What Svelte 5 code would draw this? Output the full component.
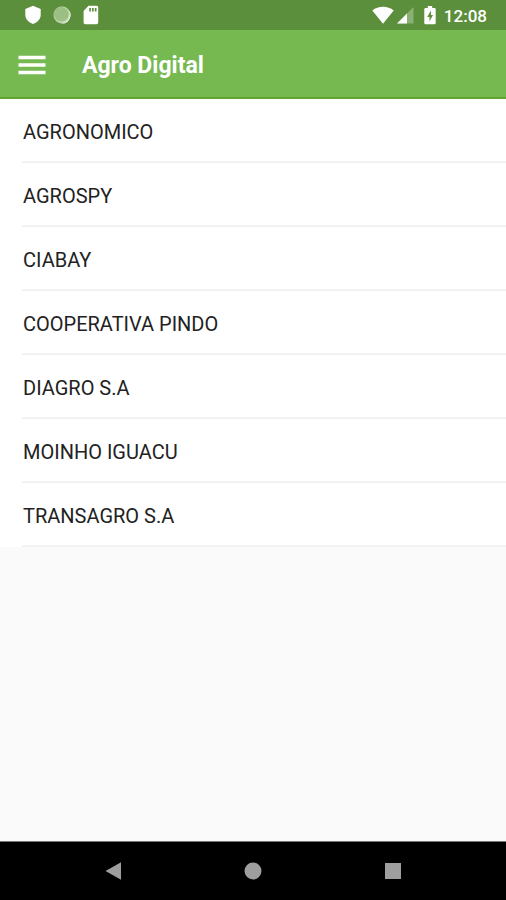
<script>
  const companies = [
    'AGRONOMICO',
    'AGROSPY',
    'CIABAY',
    'COOPERATIVA PINDO',
    'DIAGRO S.A',
    'MOINHO IGUACU',
    'TRANSAGRO S.A',
  ];
</script>

<div class="screen">
  <div class="status">
    <div class="group notices">
      <svg width="16" height="20" viewBox="0 0 16 20" aria-hidden="true">
        <path d="M8 .8 15.700 4v6c0 4-3.200 7.200-7.700 9C3.500 17.200.3 14 .3 10V4Z" fill="#fff" />
      </svg>
      <svg width="18" height="20" viewBox="0 0 18 20" aria-hidden="true">
        <circle cx="9" cy="10" r="8.500" fill="#c3dab4" />
        <circle cx="8.300" cy="9.300" r="7.300" fill="#9cc083" />
        <path d="M15.500 4.500A8.500 8.500 0 0 1 6.500 18.100 9 9 0 0 0 15.500 4.500Z" fill="#eef6e9" />
      </svg>
      <svg width="16" height="20" viewBox="0 0 16 20" aria-hidden="true">
        <path d="M5.500 .8H13.500a1.700 1.700 0 0 1 1.700 1.700V17.500a1.700 1.700 0 0 1-1.700 1.700H2.300A1.700 1.700 0 0 1 .6 17.500V6Z" fill="#fff" />
        <path d="M6.200 3h1.700v3.500H6.200ZM9 3h1.700v3.500H9ZM11.800 3h1.700v3.500h-1.700Z" fill="#5b8f3c" />
      </svg>
    </div>
    <div class="group system">
      <svg width="22" height="18" viewBox="0 0 22 18" aria-hidden="true">
        <path d="M.3 4.500C6.200-.5 15.800-.5 21.700 4.500L11 17.700Z" fill="#fff" />
      </svg>
      <svg class="signal" width="17" height="18" viewBox="0 0 17 18" aria-hidden="true">
        <path d="M0 17.500 16.500 1v16.500Z" fill="#8bb074" />
        <path d="M0 17.500 10 7.500v10Z" fill="#fff" />
      </svg>
      <svg class="battery" width="12" height="20" viewBox="0 0 12 20" aria-hidden="true">
        <path d="M3.800 1h4.400v2H10.500A1.200 1.200 0 0 1 11.700 4.200V18a1.200 1.200 0 0 1-1.200 1.200h-9A1.200 1.200 0 0 1 .3 18V4.200A1.200 1.200 0 0 1 1.500 3H3.800Z" fill="#fff" />
        <path d="M7 5.500 3.200 12H5.500v4.500L9 10H7Z" fill="#5b8f3c" />
      </svg>
      <time>12:08</time>
    </div>
  </div>

  <header>
    <button class="menu" aria-label="Menu">
      <svg width="28" height="20" viewBox="0 0 28 20" aria-hidden="true">
        <path d="M.5 2.500h27M.5 10h27M.5 17.500h27" stroke="#fff" stroke-width="3.500" />
      </svg>
    </button>
    <h1>Agro Digital</h1>
  </header>

  <main>
    <ul>
      {#each companies as company}
        <li><button class="company">{company}</button></li>
      {/each}
    </ul>
  </main>

  <nav>
    <button aria-label="Back">
      <svg width="18" height="20" viewBox="0 0 18 20" aria-hidden="true">
        <path d="M1.500 10 17 1.300v17.400Z" fill="#9e9e9e" />
      </svg>
    </button>
    <button aria-label="Home">
      <svg width="18" height="20" viewBox="0 0 18 20" aria-hidden="true">
        <circle cx="9" cy="10" r="8.500" fill="#9e9e9e" />
      </svg>
    </button>
    <button aria-label="Recent apps">
      <svg width="18" height="20" viewBox="0 0 18 20" aria-hidden="true">
        <rect x="1" y="2" width="16" height="16" fill="#9e9e9e" />
      </svg>
    </button>
  </nav>
</div>

<style>
  :global(body) {
    margin: 0;
    background: #fafafa;
  }

  .screen {
    display: flex;
    flex-direction: column;
    min-height: 100vh;
    font-family: Roboto, "Liberation Sans", sans-serif;
    background: #fafafa;
  }

  svg {
    display: block;
    flex: none;
  }

  button {
    margin: 0;
    padding: 0;
    border: 0;
    background: none;
    font: inherit;
    color: inherit;
    cursor: pointer;
  }

  .status {
    display: flex;
    align-items: center;
    justify-content: space-between;
    height: 30px;
    padding: 0 19px 0 25px;
    background: #5b8f3c;
    color: #fff;
  }

  .group {
    display: flex;
    align-items: center;
  }

  .notices {
    gap: 12px;
  }

  .signal {
    margin-left: 3px;
  }

  .battery {
    margin: 0 8px 0 10px;
  }

  time {
    padding-top: 2px;
    font-size: 17px;
    line-height: 24px;
    font-weight: 500;
  }

  header {
    display: flex;
    align-items: center;
    box-sizing: border-box;
    height: 69px;
    padding: 2px 18px 0;
    gap: 36px;
    background: #75b950;
    border-bottom: 2px solid #62a631;
    color: #fff;
  }

  h1 {
    margin: 0;
    padding-top: 2px;
    font-size: 23px;
    line-height: 32px;
    font-weight: 700;
  }

  main {
    flex: 1;
  }

  ul {
    margin: 0;
    padding: 0 0 0 22px;
    list-style: none;
    background: #fff;
  }

  li {
    border-bottom: 2px solid #f2f2f2;
  }

  .company {
    display: block;
    width: 100%;
    height: 62px;
    padding: 3px 0 0 1px;
    text-align: left;
    font-size: 20px;
    line-height: 24px;
    color: #222;
  }

  nav {
    display: flex;
    box-sizing: border-box;
    height: 59px;
    padding: 0 43px;
    background: #000;
    border-top: 1px solid #777;
  }

  nav button {
    display: flex;
    flex: 1;
    align-items: center;
    justify-content: center;
  }
</style>
